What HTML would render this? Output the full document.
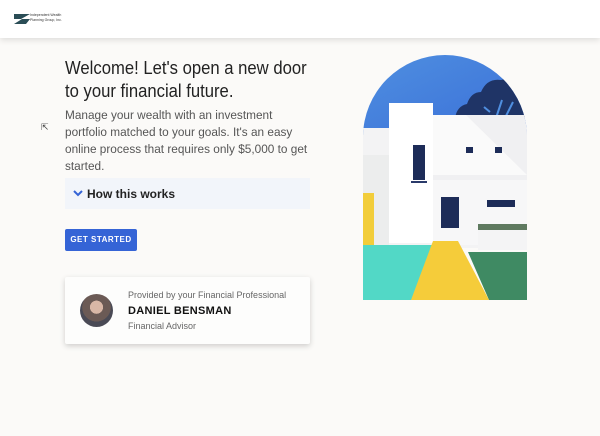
<!DOCTYPE html>
<html><head><style>
*{margin:0;padding:0;box-sizing:border-box}
body{width:600px;height:436px;background:#fbfaf8;font-family:"Liberation Sans",sans-serif;position:relative;overflow:hidden}
.hdr{position:absolute;left:0;top:0;width:600px;height:38px;background:#fff;box-shadow:0 2px 6px rgba(0,0,0,.12)}
.abs{position:absolute}
h1{position:absolute;left:65px;top:56px;font-size:18.5px;font-weight:normal;line-height:23px;color:#222;white-space:nowrap;transform:scaleX(.9);transform-origin:0 0}
.p{position:absolute;left:65px;top:107px;font-size:12.3px;line-height:17px;color:#555;white-space:nowrap;transform:scaleX(.96);transform-origin:0 0}
.how{position:absolute;left:65px;top:178px;width:245px;height:31px;background:#f2f5fa;font-size:12px;font-weight:bold;color:#222;padding:9px 0 0 22px}
.btn{position:absolute;left:65px;top:229px;width:72px;height:22px;background:#3564d6;color:#fff;font-size:8px;font-weight:bold;letter-spacing:.5px;text-align:center;line-height:22px;border-radius:2px}
.card{position:absolute;left:65px;top:277px;width:245px;height:67px;background:#fdfdfc;box-shadow:0 2px 6px rgba(0,0,0,.18);border-radius:2px}
</style></head><body>
<div class="hdr">
<svg class="abs" style="left:12px;top:11px" width="20" height="15"><path d="M2 3h16l-9 5h9l-4 5H2l8-5H2z" fill="#2a4d56"/></svg>
<div class="abs" style="left:30px;top:13px;font-size:3.5px;color:#333;line-height:5px">Independent Wealth<br>Planning Group, Inc.</div>
</div>
<div class="abs" style="left:41px;top:122px;font-size:9px;color:#444">⇱</div>
<h1>Welcome! Let's open a new door<br>to your financial future.</h1>
<div class="p">Manage your wealth with an investment<br>portfolio matched to your goals. It's an easy<br>online process that requires only $5,000 to get<br>started.</div>
<div class="how"><svg class="abs" style="left:8px;top:12px" width="10" height="7"><path d="M1 1l4 4 4-4" stroke="#3564d6" stroke-width="2" fill="none"/></svg>How this works</div>
<div class="btn">GET STARTED</div>
<div class="card">
<div class="abs" style="left:15px;top:17px;width:33px;height:33px;border-radius:50%;background:radial-gradient(circle at 50% 40%,#d9b7a6 0 25%,#6b5a55 26% 55%,#4a4a55 56%)"></div>
<div class="abs" style="left:63px;top:13px;font-size:9px;color:#666">Provided by your Financial Professional</div>
<div class="abs" style="left:63px;top:28px;font-size:11px;font-weight:bold;color:#111;letter-spacing:.3px">DANIEL BENSMAN</div>
<div class="abs" style="left:63px;top:44px;font-size:9px;color:#666">Financial Advisor</div>
</div>
<svg class="abs" style="left:363px;top:55px" width="164" height="245" viewBox="363 55 164 245">
<defs><linearGradient id="sk" x1="0" y1="0" x2="1" y2="1"><stop offset="0" stop-color="#4f8fe0"/><stop offset="1" stop-color="#3a6fd8"/></linearGradient>
<clipPath id="c"><path d="M363 137a82 82 0 0 1 164 0V300H363z"/></clipPath></defs>
<g clip-path="url(#c)">
<rect x="363" y="55" width="164" height="80" fill="url(#sk)"/>
<path d="M455 118q2-12 12-14q4-12 14-12q6-14 20-12q12-4 26 4V118z" fill="#1f3466"/>
<path d="M496 118l6-18M505 118l8-16M490 112l-6-5" stroke="#4f8fe0" stroke-width="2"/>
<rect x="363" y="128" width="164" height="120" fill="#f3f3f4"/>
<rect x="363" y="155" width="26" height="100" fill="#eceded"/>
<rect x="389" y="103" width="44" height="140" fill="#fff"/>
<rect x="433" y="115" width="94" height="70" fill="#f0f0f2"/>
<path d="M433 115h33l61 60H433z" fill="#fafafa"/>
<rect x="433" y="180" width="94" height="65" fill="#f7f7f8"/>
<rect x="413" y="145" width="12" height="35" fill="#1d2c58"/><rect x="411" y="181" width="16" height="2" fill="#2a3a6a"/>
<rect x="466" y="147" width="7" height="6" fill="#1d2c58"/><rect x="495" y="147" width="7" height="6" fill="#1d2c58"/>
<rect x="441" y="197" width="18" height="31" fill="#1d2c58"/>
<rect x="487" y="200" width="28" height="7" fill="#1d2c58"/>
<rect x="478" y="225" width="49" height="25" fill="#f4f4f5"/><rect x="478" y="224" width="49" height="6" fill="#5f7a60"/>
<rect x="363" y="193" width="11" height="61" fill="#f2cd3a"/>
<path d="M363 245h69l-20 55H363z" fill="#52d8c6"/>
<path d="M468 252h59v48h-38z" fill="#3f8a63"/>
<path d="M433 241h25l31 59H411z" fill="#f5cc3a"/>
</g></svg>
</body></html>
